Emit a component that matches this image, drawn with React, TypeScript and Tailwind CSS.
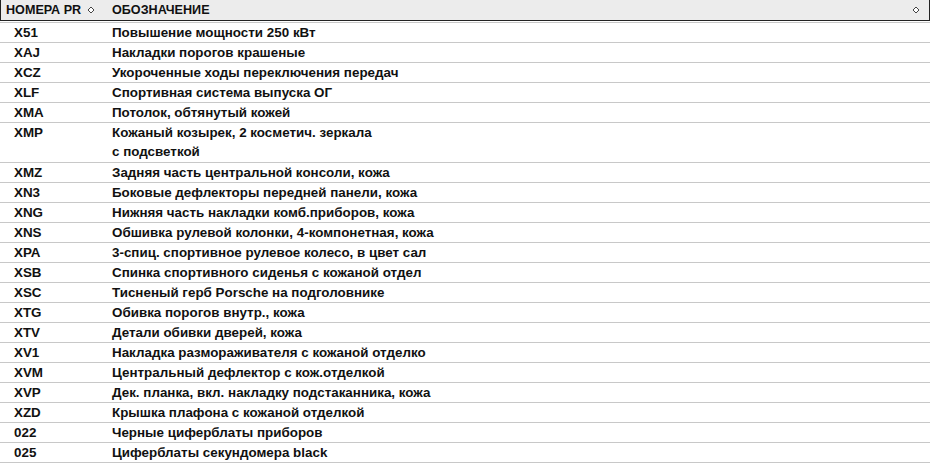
const rows: { code: string; text: string[] }[] = [
  { code: "X51", text: ["Повышение мощности 250 кВт"] },
  { code: "XAJ", text: ["Накладки порогов крашеные"] },
  { code: "XCZ", text: ["Укороченные ходы переключения передач"] },
  { code: "XLF", text: ["Спортивная система выпуска ОГ"] },
  { code: "XMA", text: ["Потолок, обтянутый кожей"] },
  { code: "XMP", text: ["Кожаный козырек, 2 косметич. зеркала", "с подсветкой"] },
  { code: "XMZ", text: ["Задняя часть центральной консоли, кожа"] },
  { code: "XN3", text: ["Боковые дефлекторы передней панели, кожа"] },
  { code: "XNG", text: ["Нижняя часть накладки комб.приборов, кожа"] },
  { code: "XNS", text: ["Обшивка рулевой колонки, 4-компонетная, кожа"] },
  { code: "XPA", text: ["3-спиц. спортивное рулевое колесо, в цвет сал"] },
  { code: "XSB", text: ["Спинка спортивного сиденья с кожаной отдел"] },
  { code: "XSC", text: ["Тисненый герб Porsche на подголовнике"] },
  { code: "XTG", text: ["Обивка порогов внутр., кожа"] },
  { code: "XTV", text: ["Детали обивки дверей, кожа"] },
  { code: "XV1", text: ["Накладка размораживателя с кожаной отделко"] },
  { code: "XVM", text: ["Центральный дефлектор с кож.отделкой"] },
  { code: "XVP", text: ["Дек. планка, вкл. накладку подстаканника, кожа"] },
  { code: "XZD", text: ["Крышка плафона с кожаной отделкой"] },
  { code: "022", text: ["Черные циферблаты приборов"] },
  { code: "025", text: ["Циферблаты секундомера black"] },
];

const SortIcon = () => (
  <svg width="8" height="8" viewBox="0 0 8 8" className="shrink-0">
    <path d="M4 1 L7 4 L4 7 L1 4 Z" fill="white" stroke="#444" strokeWidth="1" />
  </svg>
);

export default function App() {
  return (
    <div className="w-[931px] h-[463px] bg-white overflow-hidden font-['Liberation_Sans',Arial,sans-serif] font-bold text-[#111]">
      <div className="w-[930px] h-[21px] bg-[#ececec] border-l border-r border-b border-[#222] flex items-center text-[12.6px]">
        <div className="w-[111px] pl-[5px] flex items-center gap-[6px]">
          <span>НОМЕРА PR</span>
          <SortIcon />
        </div>
        <div className="flex-1 flex items-center justify-between pr-[9px]">
          <span>ОБОЗНАЧЕНИЕ</span>
          <SortIcon />
        </div>
      </div>

      <div className="mt-px w-[930px] border-b border-[#c8c8c8] text-[13.4px]">
        {rows.map((r) => (
          <div key={r.code} className="flex border-t border-[#c8c8c8]">
            <div className="w-[112px] pl-[14px] leading-[19px]">{r.code}</div>
            <div className="whitespace-nowrap">
              {r.text.map((t, i) => (
                <div key={i} className={i === 0 ? "leading-[19px]" : "leading-[20px]"}>
                  {t}
                </div>
              ))}
            </div>
          </div>
        ))}
      </div>
    </div>
  );
}
